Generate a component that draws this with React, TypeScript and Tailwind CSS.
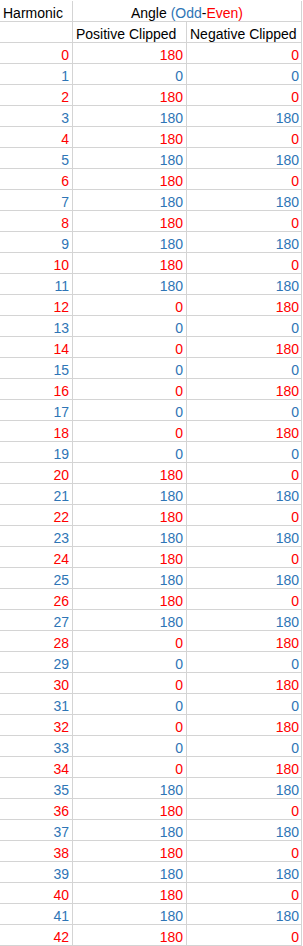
const RED = "text-[#ff0000]";
const BLUE = "text-[#2e75b6]";

// [harmonic, positive clipped, negative clipped]
const rows: [number, number, number][] = [
  [0, 180, 0], [1, 0, 0], [2, 180, 0], [3, 180, 180], [4, 180, 0],
  [5, 180, 180], [6, 180, 0], [7, 180, 180], [8, 180, 0], [9, 180, 180],
  [10, 180, 0], [11, 180, 180], [12, 0, 180], [13, 0, 0], [14, 0, 180],
  [15, 0, 0], [16, 0, 180], [17, 0, 0], [18, 0, 180], [19, 0, 0],
  [20, 180, 0], [21, 180, 180], [22, 180, 0], [23, 180, 180], [24, 180, 0],
  [25, 180, 180], [26, 180, 0], [27, 180, 180], [28, 0, 180], [29, 0, 0],
  [30, 0, 180], [31, 0, 0], [32, 0, 180], [33, 0, 0], [34, 0, 180],
  [35, 180, 180], [36, 180, 0], [37, 180, 180], [38, 180, 0], [39, 180, 180],
  [40, 180, 0], [41, 180, 180], [42, 180, 0],
];

const cell = "flex h-[21px] items-end border-b border-[#d4d4d4] pb-px";

export default function App() {
  return (
    <div
      className="min-h-[946px] w-[303px] bg-white pt-px text-[14px] leading-none text-black"
      style={{ fontFamily: '"Liberation Sans", Arial, sans-serif' }}
    >
      <div className="w-[302px] border-r border-[#d4d4d4]">
        {/* header row 1 */}
        <div className="flex">
          <div className={`${cell} w-[73px] border-r pl-[3px]`}>Harmonic</div>
          <div className={`${cell} w-[228px] justify-center`}>
            Angle&nbsp;<span className={BLUE}>(Odd</span>-<span className={RED}>Even)</span>
          </div>
        </div>
        {/* header row 2 */}
        <div className="flex">
          <div className={`${cell} w-[73px] border-r`} />
          <div className={`${cell} w-[114px] border-r pl-[3px]`}>Positive Clipped</div>
          <div className={`${cell} w-[114px] pl-[3px]`}>Negative Clipped</div>
        </div>
        {rows.map(([h, pos, neg]) => {
          const color = h % 2 === 0 ? RED : BLUE;
          return (
            <div key={h} className={`flex ${color}`}>
              <div className={`${cell} w-[73px] justify-end border-r pr-[3px]`}>{h}</div>
              <div className={`${cell} w-[114px] justify-end border-r pr-[3px]`}>{pos}</div>
              <div className={`${cell} w-[114px] justify-end pr-[2px]`}>{neg}</div>
            </div>
          );
        })}
      </div>
    </div>
  );
}
